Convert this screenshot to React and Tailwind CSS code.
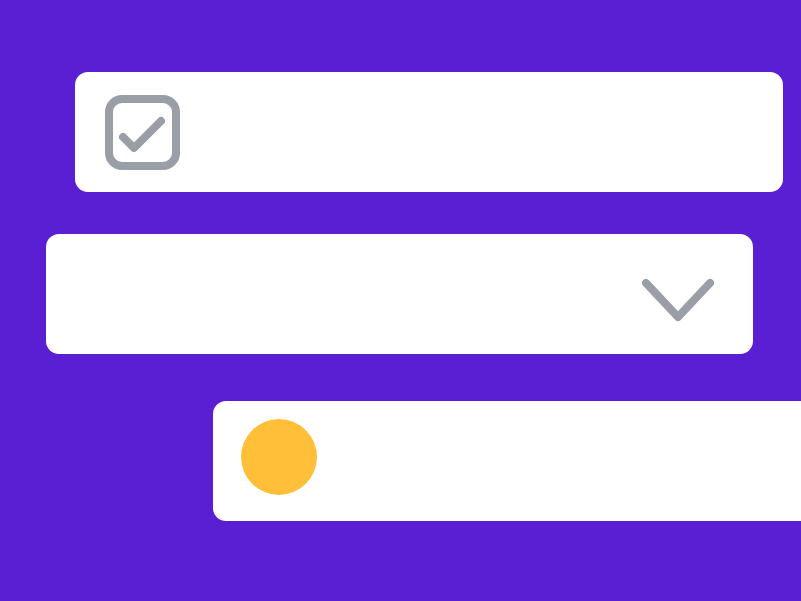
export default function App() {
  return (
    <div className="w-[801px] h-[601px] overflow-hidden bg-[#5a1fd3] flex flex-col pt-[72px]">
      <div className="ml-[75px] w-[708px] h-[120px] bg-white rounded-[13px] flex items-start pt-[23px] pl-[30px] shrink-0">
        <svg width="76" height="76" viewBox="0 0 76 76" fill="none">
          <rect x="4" y="4" width="67" height="67" rx="13" stroke="#9a9ea7" strokeWidth="8" />
          <path d="M18 42 L29 53 L56 26" stroke="#9a9ea7" strokeWidth="8" strokeLinecap="round" strokeLinejoin="round" />
        </svg>
      </div>
      <div className="mt-[42px] ml-[46px] w-[707px] h-[120px] bg-white rounded-[13px] flex justify-end items-start pt-[42px] pr-[39px] shrink-0">
        <svg width="72" height="46" viewBox="0 0 72 46" fill="none">
          <path d="M4 7 L36 41 L68 7" stroke="#9a9ea7" strokeWidth="8" strokeLinecap="round" strokeLinejoin="round" />
        </svg>
      </div>
      <div className="mt-[47px] ml-[213px] w-[620px] h-[120px] bg-white rounded-[13px] flex items-start pt-[18px] pl-[28px] shrink-0">
        <div className="w-[76px] h-[76px] rounded-full bg-[#ffbf38]" />
      </div>
    </div>
  );
}
